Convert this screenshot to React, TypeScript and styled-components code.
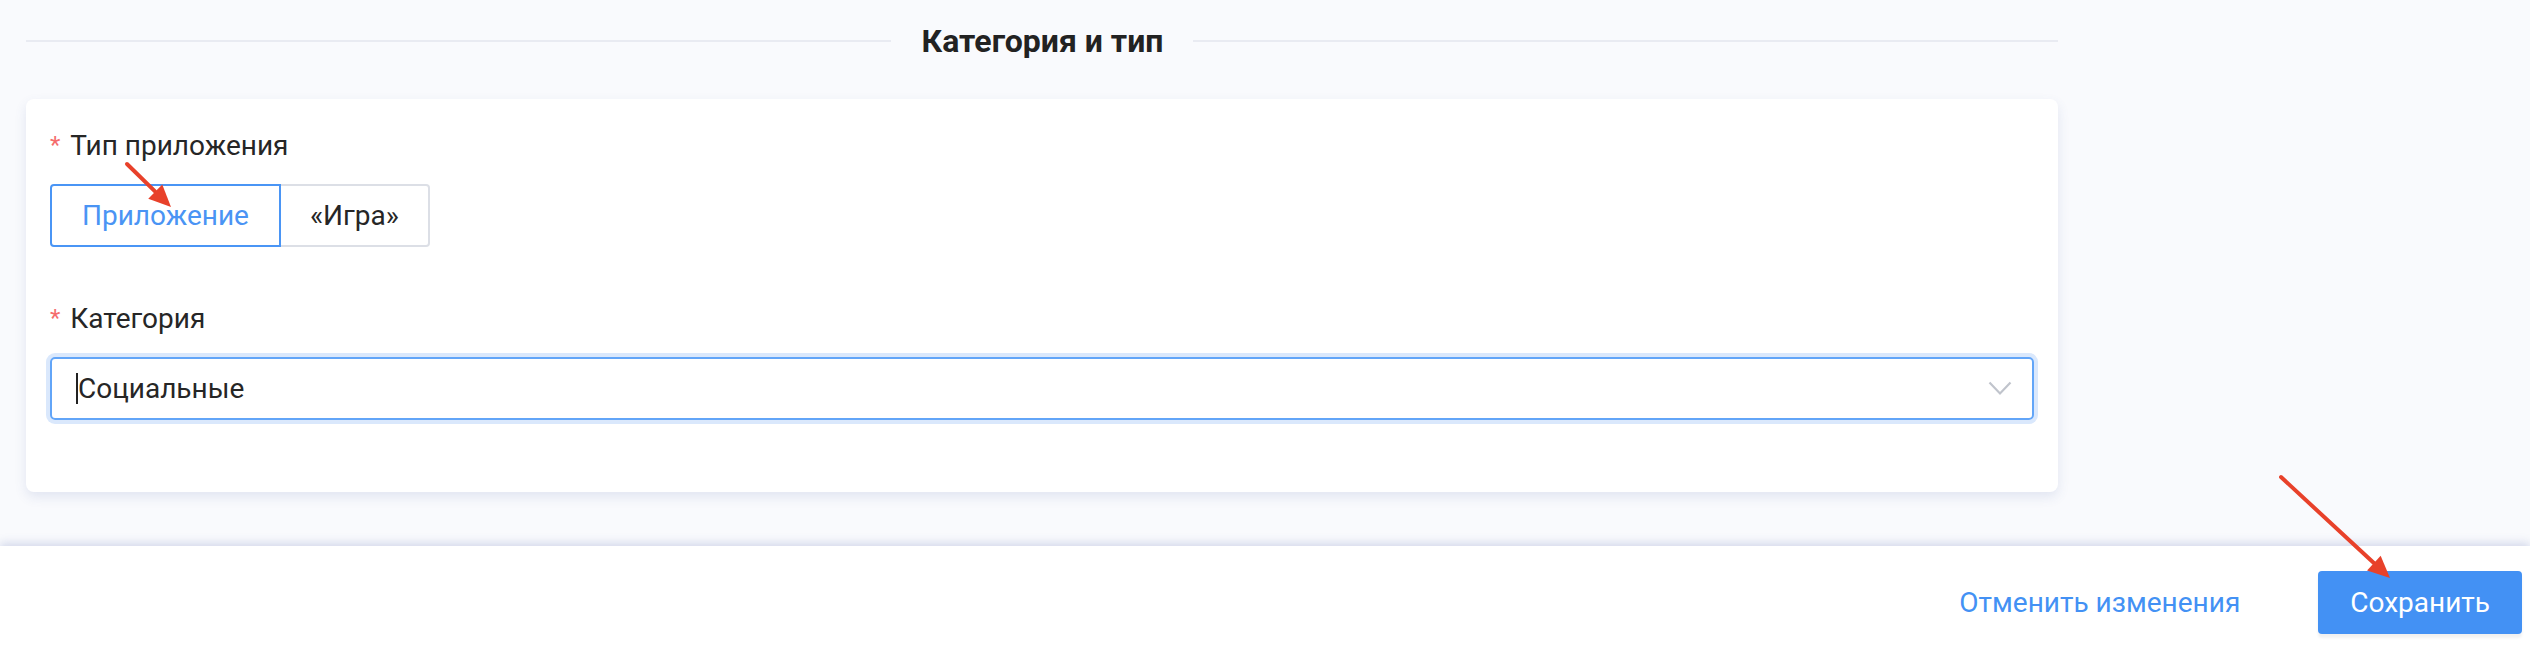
import React from "react";
import styled, { createGlobalStyle } from "styled-components";

const GlobalStyle = createGlobalStyle`
  html, body {
    margin: 0;
    padding: 0;
    background: #f9fafd;
    font-family: Roboto, "Liberation Sans", Arial, sans-serif;
    color: #262626;
  }
  * { box-sizing: border-box; }
`;

const Page = styled.div`
  position: relative;
  width: 2530px;
  height: 649px;
  overflow: hidden;
  display: flex;
  flex-direction: column;
`;

const Main = styled.main`
  height: 546px;
  flex-shrink: 0;
  padding-left: 26px;
  width: 2058px;
`;

const SectionHeader = styled.div`
  height: 82px;
  display: flex;
  align-items: center;
`;

const Rule = styled.div`
  flex: 1;
  height: 2px;
  background: #e9ebf2;
`;

const SectionTitle = styled.h2`
  margin: 0 30px 0 31px;
  font-size: 32px;
  font-weight: 700;
  color: #222222;
  letter-spacing: 0;
`;

const Card = styled.section`
  margin-top: 17px;
  height: 393px;
  background: #ffffff;
  border-radius: 8px;
  box-shadow: 0 5px 12px rgba(70, 90, 160, 0.13);
  padding: 26px 24px 0 24px;
  display: flex;
  flex-direction: column;
`;

const FieldLabel = styled.label`
  display: flex;
  align-items: center;
  height: 40px;
  font-size: 28px;
  color: #262626;
`;

const Required = styled.span`
  color: #f56c6c;
  font-size: 24px;
  margin-right: 10px;
  align-self: flex-start;
  margin-top: 6px;
`;

const RadioGroup = styled.div`
  display: inline-flex;
  align-self: flex-start;
  margin-top: 19px;
  margin-bottom: 51px;
`;

const RadioButton = styled.button<{ $active?: boolean; $first?: boolean }>`
  height: 63px;
  padding: 0 ${(p) => (p.$first ? 30 : 29)}px;
  font-family: inherit;
  font-size: 28px;
  background: #ffffff;
  color: ${(p) => (p.$active ? "#4a94f4" : "#262626")};
  border: 2px solid ${(p) => (p.$active ? "#4a95f5" : "#dcdfe6")};
  border-left-width: ${(p) => (p.$first ? "2px" : "0")};
  border-radius: ${(p) => (p.$first ? "4px 0 0 4px" : "0 4px 4px 0")};
  cursor: pointer;
`;

const Select = styled.div`
  margin-top: 19px;
  height: 63px;
  border: 2px solid #62a5f8;
  border-radius: 5px;
  box-shadow: 0 0 0 4px #dae8fc;
  display: flex;
  align-items: center;
  padding: 0 20px 0 24px;
`;

const Caret = styled.span`
  width: 2px;
  height: 31px;
  background: #222;
  flex-shrink: 0;
`;

const SelectValue = styled.span`
  flex: 1;
  font-size: 28px;
  color: #262626;
`;

const Footer = styled.footer`
  flex: 1;
  background: #ffffff;
  box-shadow: 0 -3px 9px rgba(80, 100, 170, 0.22);
  display: flex;
  justify-content: flex-end;
  align-items: flex-start;
  padding: 25px 8px 0 0;
  gap: 78px;
  position: relative;
  z-index: 1;
`;

const LinkButton = styled.button`
  height: 63px;
  border: none;
  background: transparent;
  padding: 0;
  font-family: inherit;
  font-size: 28px;
  color: #4391f4;
  cursor: pointer;
`;

const PrimaryButton = styled.button`
  height: 63px;
  padding: 0 32px;
  border: none;
  border-radius: 4px;
  background: #4391f4;
  color: #ffffff;
  font-family: inherit;
  font-size: 28px;
  box-shadow: 0 4px 3px rgba(0, 0, 0, 0.06);
  cursor: pointer;
`;

const Annotations = styled.svg`
  position: absolute;
  inset: 0;
  pointer-events: none;
  z-index: 5;
`;

const Arrow = ({ x1, y1, x2, y2 }: { x1: number; y1: number; x2: number; y2: number }) => {
  const dx = x2 - x1;
  const dy = y2 - y1;
  const len = Math.sqrt(dx * dx + dy * dy);
  const ux = dx / len;
  const uy = dy / len;
  const head = 22;
  const w = 10;
  const bx = x2 - ux * head;
  const by = y2 - uy * head;
  const p1 = `${bx - uy * w},${by + ux * w}`;
  const p2 = `${bx + uy * w},${by - ux * w}`;
  return (
    <g>
      <line x1={x1} y1={y1} x2={bx} y2={by} stroke="#e8412a" strokeWidth={4} strokeLinecap="round" />
      <polygon points={`${x2},${y2} ${p1} ${p2}`} fill="#e8412a" />
    </g>
  );
};

const Chevron = () => (
  <svg width="24" height="15" viewBox="0 0 24 15">
    <polyline points="1.5,1.5 12,12.5 22.5,1.5" fill="none" stroke="#c0c4cc" strokeWidth="2.2" />
  </svg>
);

export default function App() {
  return (
    <>
      <GlobalStyle />
      <Page>
        <Main>
          <SectionHeader>
            <Rule />
            <SectionTitle>Категория и тип</SectionTitle>
            <Rule />
          </SectionHeader>
          <Card>
            <FieldLabel>
              <Required>*</Required>Тип приложения
            </FieldLabel>
            <RadioGroup>
              <RadioButton $active $first>
                Приложение
              </RadioButton>
              <RadioButton>«Игра»</RadioButton>
            </RadioGroup>
            <FieldLabel>
              <Required>*</Required>Категория
            </FieldLabel>
            <Select>
              <Caret />
              <SelectValue>Социальные</SelectValue>
              <Chevron />
            </Select>
          </Card>
        </Main>
        <Footer>
          <LinkButton>Отменить изменения</LinkButton>
          <PrimaryButton>Сохранить</PrimaryButton>
        </Footer>
        <Annotations width="2530" height="649" viewBox="0 0 2530 649">
          <Arrow x1={127} y1={164} x2={171} y2={207} />
          <Arrow x1={2281} y1={477} x2={2390} y2={578} />
        </Annotations>
      </Page>
    </>
  );
}
